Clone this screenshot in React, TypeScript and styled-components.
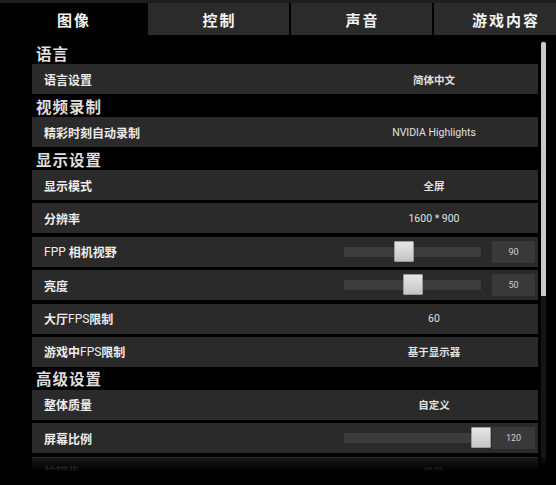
import React from 'react';
import styled, { createGlobalStyle } from 'styled-components';

type Setting =
  | { label: string; kind: 'text'; value: string }
  | { label: string; kind: 'slider'; value: string; fraction: number };

interface ISection {
  title: string;
  rows: Setting[];
}

const GlobalStyle = createGlobalStyle`
  html, body {
    margin: 0;
    padding: 0;
    background: #000;
    overflow: hidden;
  }

  body {
    font-family: Roboto, "Noto Sans CJK SC", sans-serif;
    color: #e8e8e8;
  }
`;

const StyledPage = styled.div`
  position: relative;
  width: 556px;
  height: 485px;
  background: #000;
  overflow: hidden;
  border-top: 3px solid #1e1e1e;
  box-sizing: border-box;
`;

// the last tab runs past the right edge of the window
const StyledTabBar = styled.div`
  display: grid;
  grid-template-columns: 146px 141px 141px 142px;
  column-gap: 2px;
  height: 32px;
`;

const StyledTab = styled.div<{ $active?: boolean }>`
  display: flex;
  align-items: center;
  justify-content: center;
  background: ${p => (p.$active ? '#000' : '#2b2b2b')};
  color: #f4f4f4;
  font-size: 15px;
  font-weight: 700;
  letter-spacing: 2px;
  padding-left: 2px;
`;

const StyledBody = styled.div`
  display: flex;
  padding: 6px 0 0 32px;
  gap: 3px;
`;

const StyledList = styled.div`
  width: 506px;
  display: flex;
  flex-direction: column;
`;

const StyledHeader = styled.div`
  height: 23px;
  display: flex;
  align-items: center;
  padding-left: 4px;
  font-size: 15.5px;
  font-weight: 700;
  letter-spacing: 1px;
  color: #dedede;
`;

const StyledRows = styled.div`
  display: flex;
  flex-direction: column;
  gap: 3.4px;
`;

const StyledRow = styled.div`
  height: 30px;
  display: grid;
  grid-template-columns: 298px 208px;
  background: #2a2a2a;
`;

const StyledLabel = styled.div`
  display: flex;
  align-items: center;
  padding-left: 12px;
  font-size: 12px;
  font-weight: 700;
  color: #ececec;
  white-space: pre;
`;

const StyledLatin = styled.span`
  font-weight: 400;
`;

const StyledValue = styled.div`
  display: flex;
  align-items: center;
  justify-content: center;
  font-size: 10.5px;
  font-weight: 700;
  color: #e0e0e0;
  white-space: pre;
`;

const StyledSliderCell = styled.div`
  display: flex;
  align-items: center;
  padding: 0 3px 0 14px;
  gap: 11px;
`;

const StyledTrack = styled.div`
  position: relative;
  width: 137px;
  height: 10px;
  background: #3c3c3c;
`;

const StyledThumb = styled.div`
  position: absolute;
  top: -6px;
  width: 20px;
  height: 21px;
  margin-left: -10px;
  background: linear-gradient(#e6e6e6, #c4c4c4);
  border: 1px solid #9a9a9a;
  box-sizing: border-box;
  border-radius: 1px;
`;

const StyledNumberBox = styled.div`
  width: 43px;
  height: 22px;
  display: flex;
  align-items: center;
  justify-content: center;
  background: #393939;
  font-size: 9px;
  color: #cfcfcf;
`;

const StyledScrollTrack = styled.div`
  width: 5px;
  height: 424px;
  background: #141414;
`;

const StyledScrollThumb = styled.div`
  width: 5px;
  height: 254px;
  margin-top: 1px;
  background: #c9c9c9;
  border-radius: 2px 2px 0 0;
`;

const StyledFade = styled.div`
  position: absolute;
  left: 0;
  right: 0;
  top: 455px;
  bottom: 0;
  background: linear-gradient(rgba(0, 0, 0, 0.45), #000 50%);
`;

const tabs = ['图像', '控制', '声音', '游戏内容'];

const sections: ISection[] = [
  { title: '语言', rows: [{ label: '语言设置', kind: 'text', value: '简体中文' }] },
  { title: '视频录制', rows: [{ label: '精彩时刻自动录制', kind: 'text', value: 'NVIDIA Highlights' }] },
  {
    title: '显示设置',
    rows: [
      { label: '显示模式', kind: 'text', value: '全屏' },
      { label: '分辨率', kind: 'text', value: '1600 * 900' },
      { label: 'FPP 相机视野', kind: 'slider', value: '90', fraction: 0.44 },
      { label: '亮度', kind: 'slider', value: '50', fraction: 0.5 },
      { label: '大厅FPS限制', kind: 'text', value: '60' },
      { label: '游戏中FPS限制', kind: 'text', value: '基于显示器' },
    ],
  },
  {
    title: '高级设置',
    rows: [
      { label: '整体质量', kind: 'text', value: '自定义' },
      { label: '屏幕比例', kind: 'slider', value: '120', fraction: 1 },
      { label: '抗锯齿', kind: 'text', value: '极致' },
    ],
  },
];

// latin runs render in the regular weight, CJK stays bold
const mixedText = (text: string) =>
  text.split(/([A-Za-z0-9 *]+)/).filter(Boolean).map((part, i) =>
    /[A-Za-z0-9]/.test(part) ? <StyledLatin key={i}>{part}</StyledLatin> : part
  );

const SettingRow = ({ row }: { row: Setting }) => (
  <StyledRow>
    <StyledLabel>{mixedText(row.label)}</StyledLabel>
    {row.kind === 'slider' ? (
      <StyledSliderCell>
        <StyledTrack>
          <StyledThumb style={{ left: `${row.fraction * 100}%` }} />
        </StyledTrack>
        <StyledNumberBox>{row.value}</StyledNumberBox>
      </StyledSliderCell>
    ) : (
      <StyledValue>{mixedText(row.value)}</StyledValue>
    )}
  </StyledRow>
);

const App = () => (
  <StyledPage>
    <GlobalStyle />
    <StyledTabBar>
      {tabs.map((t, i) => (
        <StyledTab key={t} $active={i === 0}>{t}</StyledTab>
      ))}
    </StyledTabBar>
    <StyledBody>
      <StyledList>
        {sections.map(s => (
          <React.Fragment key={s.title}>
            <StyledHeader>{s.title}</StyledHeader>
            <StyledRows>
              {s.rows.map(r => <SettingRow key={r.label} row={r} />)}
            </StyledRows>
          </React.Fragment>
        ))}
      </StyledList>
      <StyledScrollTrack>
        <StyledScrollThumb />
      </StyledScrollTrack>
    </StyledBody>
    <StyledFade />
  </StyledPage>
);

export default App;
